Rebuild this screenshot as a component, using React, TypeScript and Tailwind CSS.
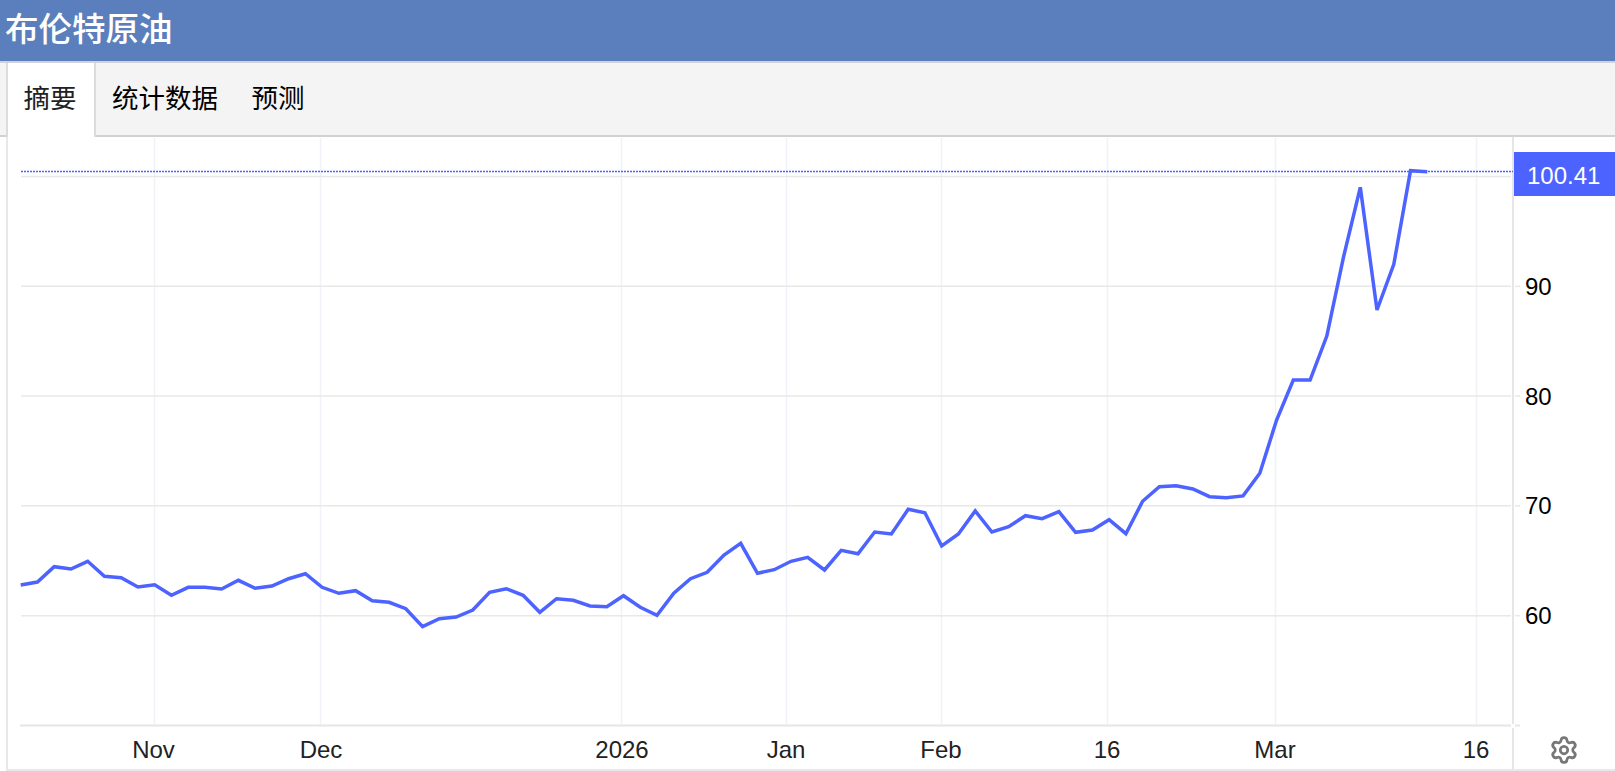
import { Settings } from "lucide-react";

const cjk = "font-['Liberation_Sans','Noto_Sans_CJK_SC',sans-serif]";

const ys = [585,582,566.7,569,561.3,576.3,577.7,587,584.7,595.3,587.3,587.3,589,580.3,588.3,586,578.7,573.7,587.3,593.3,590.7,600.7,602.3,608.7,626.7,618.7,617,610,592.3,588.7,595.3,612.3,598.7,600.3,606,606.7,595.7,607.3,615.3,593.3,578.7,572.3,555,543.3,573.3,569.7,561.3,557.3,570,550.3,553.7,532,534,509.3,512.7,546,534,511,532,526.7,515.7,518.7,511.7,532.3,530,519.7,533.7,501.3,486.7,485.7,489,496.7,497.7,495.9,473.3,420,380,380,336,256.7,187.3,310,264.3,170.7,171.7];
const points = ys.map((y, i) => `${(20.7 + 16.745 * i).toFixed(1)},${y}`).join(" ");
const gridY = [176.5, 286.3, 396, 505.8, 615.7];
const gridX = [154.5, 320.5, 621.5, 786.5, 941.5, 1107.5, 1275.5, 1476.5];
const yLabels = [["90", 295], ["80", 404.5], ["70", 514], ["60", 624]] as const;
const xLabels = [["Nov", 153.5], ["Dec", 321], ["2026", 622], ["Jan", 786], ["Feb", 941], ["16", 1107], ["Mar", 1275], ["16", 1476]] as const;

export default function App() {
  return (
    <div className={`h-[771px] w-[1615px] overflow-hidden bg-white ${cjk}`}>
      <header className="flex h-[63px] items-center border-b-2 border-[#d0d3d9] bg-[#5b7fbc] pb-[2px] pl-[5px]">
        <h1 className="text-[33.5px] leading-none font-medium text-white">布伦特原油</h1>
      </header>
      <nav className="flex h-[74px] border-b-2 border-[#d2d2d2] bg-[#f4f4f4] pl-[6px] text-[26.5px] text-black">
        <div className="mb-[-2px] flex items-center border-x-2 border-x-[#dcdcdc] bg-white pb-[1px] pl-[15.5px] pr-[17.5px] pt-[1px] text-[#222]">摘要</div>
        <div className="flex items-center pl-[16px] pr-[16.5px] pt-[1px]">统计数据</div>
        <div className="flex items-center px-[17px] pt-[1px]">预测</div>
      </nav>
      <div className="relative ml-[6px] h-[634px] border-b-2 border-l-2 border-[#e8e8ec]">
        <svg width="1607" height="632" className="block" fontFamily="'Liberation Sans', sans-serif" fontSize="24">
          <g transform="translate(-8 -137)">
            {gridX.map((x) => (
              <line key={x} x1={x} x2={x} y1="138" y2="725" stroke="#eff2f6" strokeWidth="1.5" />
            ))}
            {gridY.map((y) => (
              <line key={y} x1="21" x2="1511" y1={y} y2={y} stroke="#e8e8e8" strokeWidth="1.5" />
            ))}
            {gridY.slice(1).map((y) => (
              <line key={y} x1="1515" x2="1520" y1={y} y2={y} stroke="#e8e8e8" strokeWidth="1.5" />
            ))}
            <line x1="20" x2="1511" y1="725.5" y2="725.5" stroke="#e6e6e8" strokeWidth="2" />
            <line x1="1515" x2="1520" y1="725.5" y2="725.5" stroke="#e6e6e8" strokeWidth="2" />
            <line x1="1513" x2="1513" y1="137" y2="724" stroke="#e6e6e8" strokeWidth="2" />
            <line x1="1513" x2="1513" y1="728" y2="769" stroke="#e6e6e8" strokeWidth="2" />
            <line x1="21" x2="1513" y1="171.5" y2="171.5" stroke="#4d63ff" strokeWidth="1.6" strokeDasharray="2 1" />
            <polyline points={points} fill="none" stroke="#4d63ff" strokeWidth="3.5" strokeLinejoin="miter" strokeLinecap="butt" />
            <rect x="1514" y="152" width="101" height="44" fill="#4d63ff" />
            <text x="1527" y="183.5" fill="#ffffff">100.41</text>
            {yLabels.map(([t, y]) => (
              <text key={t} x="1525" y={y} fill="#000000">{t}</text>
            ))}
            {xLabels.map(([t, x]) => (
              <text key={x} x={x} y="758" textAnchor="middle" fill="#222222">{t}</text>
            ))}
          </g>
        </svg>
        <Settings className="absolute right-[36.5px] top-[597.5px] text-[#777777]" size={30} strokeWidth={2.2} />
      </div>
    </div>
  );
}
